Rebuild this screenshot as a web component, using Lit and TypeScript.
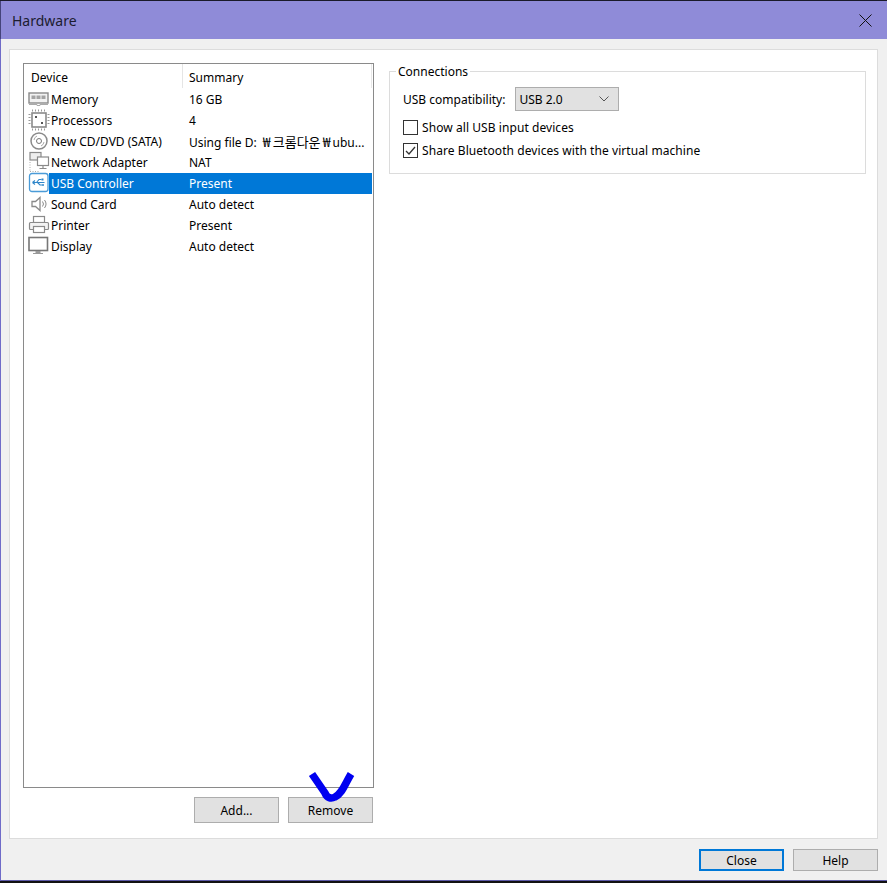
import { LitElement, html, css, svg } from "lit";
import { customElement } from "lit/decorators.js";

const G = "#8a8a8a";
const icons: Record<string, unknown> = {
  memory: svg`<rect x="1" y="5" width="19" height="10" fill="#f2f2f2" stroke="${G}" stroke-width="1.400"/><path d="M3.500 7.500h4v3.500h-4zM8.500 7.500h4v3.500h-4zM13.500 7.500h4v3.500h-4z" fill="#a3a3a3"/><path d="M1 16.500h8v1h3v-1h8" fill="none" stroke="#aaa"/>`,
  cpu: svg`<rect x="4" y="4" width="14" height="14" fill="#fff" stroke="${G}" stroke-width="1.600"/><path d="M4.500 .5v2M7.500 .5v2M10.500 .5v2M13.500 .5v2M16.500 .5v2M4.500 19.500v2M7.500 19.500v2M10.500 19.500v2M13.500 19.500v2M16.500 19.500v2M.5 5.500h2M.5 8.500h2M.5 11.500h2M.5 14.500h2M19.500 5.500h2M19.500 8.500h2M19.500 11.500h2M19.500 14.500h2" stroke="#999"/><path d="M7 7h2v2H7zM13 13h2v2h-2z" fill="#555"/>`,
  cd: svg`<circle cx="11" cy="11" r="8" fill="#fff" stroke="${G}" stroke-width="1.500"/><circle cx="11" cy="11" r="2.500" fill="none" stroke="#777"/><path d="M6 10a5 5 0 0 1 3-4M16 12a5 5 0 0 1-3 4" fill="none" stroke="#aaa"/>`,
  net: svg`<rect x="2" y="1.500" width="11" height="7.500" fill="#eee" stroke="${G}" stroke-width="1.200"/><rect x="9.500" y="6" width="11" height="8.500" fill="#fff" stroke="${G}" stroke-width="1.200"/><path d="M15 14.500v2.500M11.500 17.500h7" stroke="${G}" stroke-width="1.200"/><path d="M2 11v9M2 20.500h9" stroke="#aaa" stroke-dasharray="1 1.500"/>`,
  usb: svg`<rect x="1.500" y="1.500" width="18.500" height="18" rx="2.500" fill="#fff" stroke="#4a9bd8" stroke-width="1.300"/><path d="M4.500 10.500h12M4.500 10.500l2.500-2M4.500 10.500l2.500 2M8.500 10.500l2.500-3h2.500M9.500 10.500l2.500 2.500h2" fill="none" stroke="#2f86c9" stroke-width="1.100"/><rect x="13.500" y="6.500" width="2" height="2" fill="#2f86c9"/><circle cx="15" cy="13" r="1" fill="#2f86c9"/>`,
  sound: svg`<path d="M4 8.500h3.500l4.500-4v13l-4.500-4H4z" fill="#fff" stroke="${G}" stroke-width="1.300"/><path d="M14.500 8.500a4 4 0 0 1 0 5M16.500 7a6.500 6.500 0 0 1 0 8" fill="none" stroke="#8a8a8a"/>`,
  printer: svg`<rect x="5.500" y="2.500" width="11" height="6" fill="#fff" stroke="${G}" stroke-width="1.200"/><rect x="1.500" y="8.500" width="19" height="7" rx="1" fill="#f2f2f2" stroke="${G}" stroke-width="1.200"/><rect x="5.500" y="12.500" width="11" height="6" fill="#fff" stroke="${G}" stroke-width="1.200"/>`,
  display: svg`<rect x="1" y="2.500" width="18.500" height="13" fill="#fff" stroke="#777" stroke-width="1.600"/><path d="M7.500 16h5v2h-5z" fill="#999"/><path d="M5 18.500h10" stroke="#999"/>`,
};

const rows = [
  ["memory", "Memory", "16 GB"],
  ["cpu", "Processors", "4"],
  ["cd", "New CD/DVD (SATA)", ""],
  ["net", "Network Adapter", "NAT"],
  ["usb", "USB Controller", "Present"],
  ["sound", "Sound Card", "Auto detect"],
  ["printer", "Printer", "Present"],
  ["display", "Display", "Auto detect"],
];

@customElement("app-root")
export class AppRoot extends LitElement {
  static styles = css`
    :host {
      display: flex;
      flex-direction: column;
      position: relative;
      width: 887px;
      height: 883px;
      box-sizing: border-box;
      background: #f0f0f0;
      border-top: 1px solid #1a1a2a;
      border-bottom: 2px solid #111;
      font: 12px "Noto Sans", "Noto Sans CJK KR", sans-serif;
      color: #000;
      overflow: hidden;
    }
    .title {
      flex: none;
      height: 38px;
      background: #8f8bd8;
      display: flex;
      align-items: center;
      justify-content: space-between;
      padding: 0 15px 0 11px;
      border-left: 1px solid #45437a;
      font-size: 14px;
      color: #1c1c30;
    }
    .close { display: block; }
    .body {
      flex: 1;
      min-height: 0;
      display: flex;
      flex-direction: column;
      padding: 10px 9px 9px 8px;
      border-left: 1px solid #6f6bc8;
      border-bottom: 1px solid #5d5aa8;
    }
    .panel {
      flex: 1;
      min-height: 0;
      box-sizing: border-box;
      background: #fff;
      border: 1px solid #dcdcdc;
      padding: 13px 11px 15px 13px;
      display: grid;
      grid-template-columns: 351px 1fr;
      column-gap: 15px;
    }
    .left { display: flex; flex-direction: column; min-height: 0; }
    .list {
      flex: 1;
      min-height: 0;
      border: 1px solid #8a8a8a;
      box-sizing: border-box;
      padding: 0 1px 0 0;
    }
    .head {
      display: grid;
      grid-template-columns: 158px 1fr;
      height: 24px;
      align-items: center;
      border-right: 1px solid #e8e8e8;
    }
    .head div { box-sizing: border-box; padding: 2px 0 0 7px; height: 100%; display: flex; align-items: center; }
    .head div + div { border-left: 1px solid #e5e5e5; padding-left: 6px; }
    .row { display: grid; grid-template-columns: 25px 1fr; height: 21px; align-items: center; }
    .ico { display: block; width: 22px; height: 22px; margin-left: 4px; }
    .cells {
      display: grid;
      grid-template-columns: 140px 1fr;
      height: 21px;
      align-items: center;
      white-space: nowrap;
    }
    .cells span:first-child { padding-left: 2px; }
    .sel .cells { background: #0078d7; color: #fff; }
    .kr { font-family: "Noto Sans CJK KR", sans-serif; font-size: 13px; }
    .won { display: inline-block; width: 12px; text-align: center; font-size: 14px; }
    .actions {
      flex: none;
      display: flex;
      justify-content: flex-end;
      gap: 9px;
      padding: 9px 1px 0 0;
    }
    .btn {
      box-sizing: border-box;
      width: 85px;
      height: 26px;
      background: #e1e1e1;
      border: 1px solid #adadad;
      font: inherit;
      color: #000;
      padding: 0;
    }
    .footer {
      flex: none;
      display: flex;
      justify-content: flex-end;
      gap: 9px;
      padding-top: 10px;
    }
    .footer .btn { height: 22px; }
    .footer .primary { border: 2px solid #0078d7; }
    fieldset {
      margin: 0;
      padding: 7px 13px 13px;
      height: 111px;
      box-sizing: border-box;
      border: 1px solid #dcdcdc;
      min-width: 0;
    }
    legend { padding: 1px 2px 0; margin-left: -7px; line-height: 16px; }
    .usb { display: flex; align-items: center; gap: 10px; height: 24px; }
    .combo {
      box-sizing: border-box;
      width: 104px;
      height: 24px;
      background: #e1e1e1;
      border: 1px solid #adadad;
      display: flex;
      align-items: center;
      justify-content: space-between;
      padding: 0 9px 0 3px;
    }
    .check { display: flex; align-items: center; gap: 4px; height: 16px; margin-top: 8px; letter-spacing: 0.07px; }
    .check + .check { margin-top: 7px; }
    .box { display: block; width: 15px; height: 15px; flex: none; }
    .mark { position: absolute; left: 300px; top: 761px; pointer-events: none; }
  `;

  summary(s: string) {
    if (s) return s;
    return html`Using file D:<span class="kr"><span class="won">₩</span>크롬다운<span class="won">₩</span></span>ubu...`;
  }

  render() {
    return html`
      <div class="title">
        <span>Hardware</span>
        <svg class="close" width="13" height="13" viewBox="0 0 13 13"><path d="M.5.500l12 12M12.500.500l-12 12" stroke="#111" stroke-width="1"/></svg>
      </div>
      <div class="body">
        <div class="panel">
          <div class="left">
            <div class="list">
              <div class="head"><div>Device</div><div>Summary</div></div>
              ${rows.map(
                ([icon, name, sum]) => html`
                  <div class="row ${icon === "usb" ? "sel" : ""}">
                    <svg class="ico" viewBox="0 0 22 22">${icons[icon]}</svg>
                    <div class="cells"><span>${name}</span><span>${this.summary(sum)}</span></div>
                  </div>
                `,
              )}
            </div>
            <div class="actions">
              <button class="btn">Add...</button>
              <button class="btn">Remove</button>
            </div>
          </div>
          <div class="right">
            <fieldset>
              <legend>Connections</legend>
              <div class="usb">
                <span>USB compatibility:</span>
                <div class="combo">
                  <span>USB 2.0</span>
                  <svg width="10" height="6" viewBox="0 0 10 6"><path d="M.5.500L5 5 9.500.500" fill="none" stroke="#555"/></svg>
                </div>
              </div>
              <div class="check">
                <svg class="box" viewBox="0 0 15 15"><rect x=".5" y=".5" width="14" height="14" fill="#fff" stroke="#333"/></svg>
                <span>Show all USB input devices</span>
              </div>
              <div class="check">
                <svg class="box" viewBox="0 0 15 15"><rect x=".5" y=".5" width="14" height="14" fill="#fff" stroke="#333"/><path d="M3 8l3 3 6-7" fill="none" stroke="#333" stroke-width="1.300"/></svg>
                <span>Share Bluetooth devices with the virtual machine</span>
              </div>
            </fieldset>
          </div>
        </div>
        <div class="footer">
          <button class="btn primary">Close</button>
          <button class="btn">Help</button>
        </div>
      </div>
      <svg class="mark" width="60" height="45" viewBox="0 0 60 45">
        <path d="M12 12L25 31C27 36 31 37 35 35C42 32 45 22 51 12" fill="none" stroke="#0000f0" stroke-width="7.500"/>
      </svg>
    `;
  }
}
